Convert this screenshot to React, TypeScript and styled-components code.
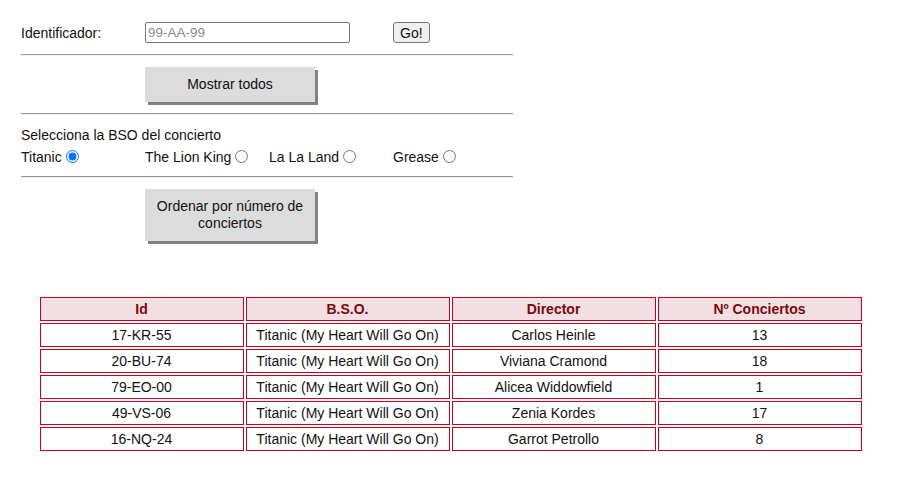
import React, { useState } from "react";
import styled, { createGlobalStyle } from "styled-components";

const GlobalStyle = createGlobalStyle`
  body {
    margin: 0;
    font-family: "Liberation Sans", Arial, sans-serif;
    font-size: 14px;
    color: #111;
    background: #fff;
  }
`;

const Page = styled.div`
  padding-top: 22px;
`;

const Form = styled.div`
  width: 492px;
  margin-left: 21px;
`;

const Row = styled.div`
  display: grid;
  grid-template-columns: 124px 248px 124px;
  align-items: center;
  height: 21px;
`;

const Label = styled.label`
  line-height: 16px;
`;

const TextInput = styled.input`
  width: 205px;
  height: 21px;
  box-sizing: border-box;
  padding: 1px 2px;
  border: 1px solid #767676;
  border-radius: 2px;
  font-family: "Liberation Sans", Arial, sans-serif;
  font-size: 13.5px;

  &::placeholder {
    color: #8a8a8a;
  }
`;

const SmallButton = styled.button`
  justify-self: start;
  height: 21px;
  padding: 1px 6px;
  font-family: "Liberation Sans", Arial, sans-serif;
  font-size: 14px;
  color: #111;
  background: #efefef;
  border: 1px solid #767676;
  border-radius: 3px;
`;

const Divider = styled.hr`
  margin: 11px 0;
  border: 0;
  border-top: 1px solid #9a9a9a;
  border-bottom: 1px solid #eeeeee;
  height: 0;
`;

const ButtonRow = styled.div`
  padding-left: 124px;
`;

const BigButton = styled.button`
  width: 170px;
  padding: 9px 8px;
  line-height: 17px;
  font-family: "Liberation Sans", Arial, sans-serif;
  font-size: 14px;
  color: #111;
  background: #dcdcdc;
  border: 0;
  box-shadow: 3px 3px 0 #808080;
  margin-bottom: 6px;
  display: block;
`;

const Caption = styled.div`
  line-height: 16px;
  margin-top: 12px;
`;

const Radios = styled.div`
  display: grid;
  grid-template-columns: repeat(4, 124px);
  margin-top: 6px;
  line-height: 16px;
`;

const RadioLabel = styled.label`
  display: flex;
  align-items: center;

  input {
    margin: 0 0 2px 4px;
    width: 13px;
    height: 13px;
  }
`;

const TableWrap = styled.div`
  padding-top: 48px;
`;

const Table = styled.table`
  margin: 0 auto;
  border-collapse: separate;
  border-spacing: 2px;
  font-size: 14px;
`;

const Th = styled.th`
  width: 202px;
  height: 22px;
  padding: 0;
  border: 1px solid #c4001d;
  background: #f1dfe3;
  color: #7a0a0a;
  font-weight: bold;
  line-height: 16px;
  text-align: center;
`;

const Td = styled.td`
  width: 202px;
  height: 22px;
  padding: 0;
  border: 1px solid #c4001d;
  color: #111;
  line-height: 16px;
  text-align: center;
`;

const rows = [
  ["17-KR-55", "Titanic (My Heart Will Go On)", "Carlos Heinle", "13"],
  ["20-BU-74", "Titanic (My Heart Will Go On)", "Viviana Cramond", "18"],
  ["79-EO-00", "Titanic (My Heart Will Go On)", "Alicea Widdowfield", "1"],
  ["49-VS-06", "Titanic (My Heart Will Go On)", "Zenia Kordes", "17"],
  ["16-NQ-24", "Titanic (My Heart Will Go On)", "Garrot Petrollo", "8"],
];

const films = ["Titanic", "The Lion King", "La La Land", "Grease"];

const App = () => {
  const [id, setId] = useState("");
  const [film, setFilm] = useState("Titanic");

  return (
    <Page>
      <GlobalStyle />
      <Form>
        <Row>
          <Label htmlFor="ident">Identificador:</Label>
          <TextInput id="ident" placeholder="99-AA-99" value={id} onChange={e => setId(e.target.value)} />
          <SmallButton>Go!</SmallButton>
        </Row>
        <Divider />
        <ButtonRow>
          <BigButton>Mostrar todos</BigButton>
        </ButtonRow>
        <Divider />
        <Caption>Selecciona la BSO del concierto</Caption>
        <Radios>
          {films.map(f => (
            <RadioLabel key={f}>
              {f}
              <input type="radio" name="bso" checked={film === f} onChange={() => setFilm(f)} />
            </RadioLabel>
          ))}
        </Radios>
        <Divider />
        <ButtonRow>
          <BigButton>Ordenar por número de conciertos</BigButton>
        </ButtonRow>
      </Form>
      <TableWrap>
        <Table>
          <thead>
            <tr>
              <Th>Id</Th>
              <Th>B.S.O.</Th>
              <Th>Director</Th>
              <Th>Nº Conciertos</Th>
            </tr>
          </thead>
          <tbody>
            {rows.map(r => (
              <tr key={r[0]}>
                {r.map((c, i) => (
                  <Td key={i}>{c}</Td>
                ))}
              </tr>
            ))}
          </tbody>
        </Table>
      </TableWrap>
    </Page>
  );
};

export default App;
